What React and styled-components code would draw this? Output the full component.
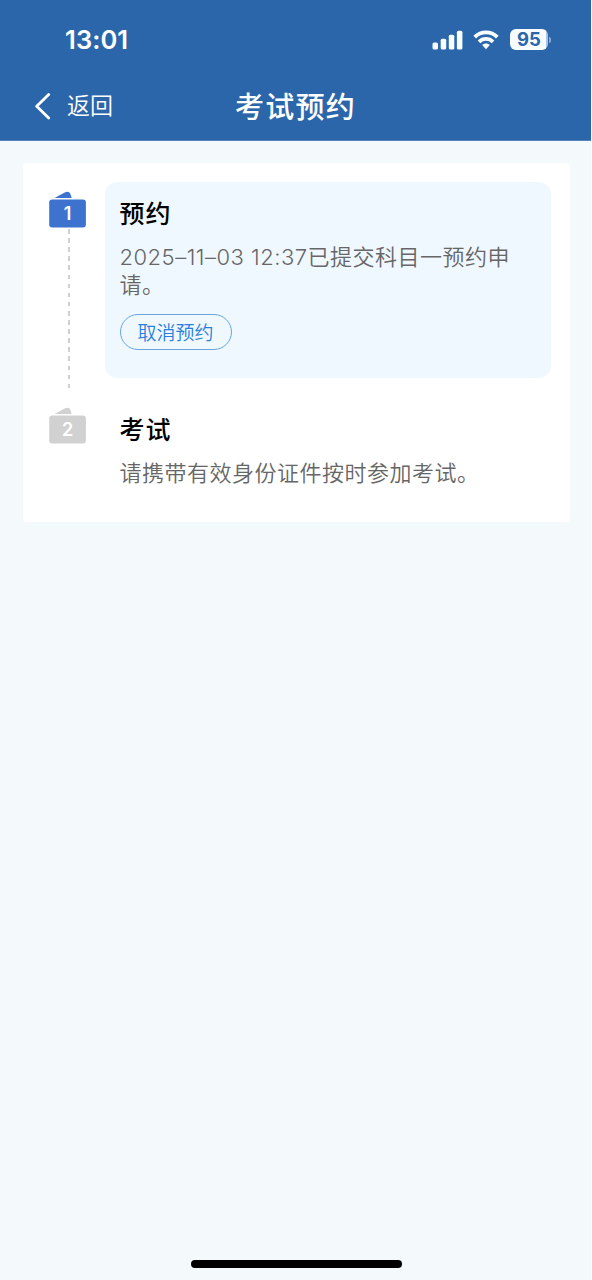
import React from "react";
import styled, { createGlobalStyle } from "styled-components";

const GlobalStyle = createGlobalStyle`
  * { box-sizing: border-box; }
  body {
    margin: 0;
    background: #f4f9fb;
    font-family: Inter, "Noto Sans CJK SC", sans-serif;
  }
`;

const Screen = styled.div`
  width: 592px;
  height: 1280px;
  display: flex;
  flex-direction: column;
  background: #f4f9fb;
  border-right: 1px solid #fbfdfe;
  overflow: hidden;
`;

const Header = styled.header`
  height: 141px;
  flex: none;
  background: #2c66aa;
  border-bottom: 1px solid #5583b6;
  color: #fff;
`;

const StatusBar = styled.div`
  height: 72px;
  display: flex;
  align-items: center;
  justify-content: space-between;
  padding: 7px 40px 0 65px;
`;

const Clock = styled.div`
  font-size: 25.5px;
  font-weight: 600;
  line-height: 30px;
  letter-spacing: 0.1px;
`;

const StatusIcons = styled.div`
  display: flex;
  align-items: center;
`;

const Battery = styled.div`
  width: 38px;
  height: 21px;
  margin-left: 11px;
  border-radius: 6px;
  background: linear-gradient(90deg, #f7fcff 95%, #a9c3df 95%);
  color: #2c66aa;
  font-size: 18.5px;
  font-weight: 700;
  line-height: 21px;
  text-align: center;
`;

const BatteryTip = styled.div`
  width: 2px;
  height: 6px;
  margin-left: 1px;
  border-radius: 0 2px 2px 0;
  background: #8aabd0;
`;

const NavBar = styled.div`
  height: 68px;
  display: grid;
  grid-template-columns: 1fr auto 1fr;
  align-items: center;
  padding: 0 34px;
`;

const Back = styled.div`
  display: flex;
  align-items: center;
  gap: 16px;
  font-size: 23px;
  font-weight: 350;
  line-height: 34px;
`;

const Title = styled.h1`
  margin: 0;
  padding-top: 4px;
  font-size: 29px;
  font-weight: 500;
  line-height: 38px;
  letter-spacing: 1.2px;
`;

const Card = styled.main`
  flex: none;
  height: 359px;
  margin: 22px 21.5px 0 22.5px;
  padding: 19px;
  border-radius: 4px;
  background: #fff;
`;

const Step = styled.section`
  display: flex;
  height: ${(p) => p.$height}px;
`;

const Rail = styled.div`
  width: 63px;
  flex: none;
  display: flex;
  flex-direction: column;
  padding: 9px 0 0 7.5px;
`;

const Marker = styled.div`
  width: 37px;
  height: 37px;
  flex: none;
  display: grid;
  color: ${(p) => (p.$active ? "#3d73cf" : "#d1d1d1")};
  > * { grid-area: 1 / 1; }
`;

const MarkerNumber = styled.span`
  padding-top: 9px;
  color: #fff;
  font-size: 18px;
  font-weight: 600;
  line-height: 28px;
  text-align: center;
`;

const Connector = styled.div`
  width: 1.5px;
  height: 160px;
  margin: 1px 0 0 19px;
  background: repeating-linear-gradient(#d0d0d0 0 4.6px, transparent 4.6px 9.1px);
`;

const Panel = styled.div`
  width: 446px;
  height: ${(p) => p.$height}px;
  padding: 12.5px 15px 0 15px;
  border-radius: 12px;
  background: ${(p) => (p.$active ? "#f0f8ff" : "transparent")};
`;

const StepTitle = styled.h2`
  margin: 0;
  color: #000;
  font-size: 25px;
  font-weight: 500;
  line-height: 39px;
  letter-spacing: 1px;
`;

const Message = styled.p`
  width: 410px;
  margin: 9.5px 0 0;
  color: #666;
  font-size: 22px;
  font-weight: 350;
  line-height: 28px;
  letter-spacing: 0.5px;
`;

const ButtonLabel = styled.span`
  font-size: 19px;
  font-weight: 350;
  line-height: 28px;
`;

const CancelButton = styled.button`
  display: flex;
  align-items: center;
  justify-content: center;
  width: 112px;
  height: 36px;
  margin-top: 14.5px;
  padding: 0;
  border: 1.5px solid #69a5dc;
  border-radius: 18px;
  background: transparent;
  color: #2a7fdc;
  font-family: "Noto Sans CJK SC", sans-serif;
`;

const HomeIndicator = styled.div`
  width: 211px;
  height: 8px;
  margin: auto auto 12px 191px;
  border-radius: 4px;
  background: #000;
`;

function Signal() {
  return (
    <svg width="31" height="20" viewBox="0 0 31 20" fill="#f7fcff">
      <rect x="0.5" y="12.5" width="5.5" height="7" rx="1.6" />
      <rect x="8.7" y="8.7" width="5.5" height="10.8" rx="1.6" />
      <rect x="16.8" y="4.7" width="5.5" height="14.8" rx="1.6" />
      <rect x="24.9" y="0.7" width="5.5" height="18.8" rx="1.6" />
    </svg>
  );
}

const WifiSvg = styled.svg`
  margin-left: 10px;
`;

function Wifi() {
  return (
    <WifiSvg width="26" height="20" viewBox="0 0 26 20" fill="none" stroke="#f7fcff" strokeWidth="3.8">
      <path d="M1.7 7.1C8 .9 18 .9 24.3 7.1" />
      <path d="M6 11.8c4-3.8 10-3.8 14 0" />
      <path d="M13 13.5c-1.5 0-2.8.5-3.8 1.5L13 19.2l3.8-4.2c-1-1-2.3-1.5-3.8-1.5Z" fill="#f7fcff" stroke="none" />
    </WifiSvg>
  );
}

function StepMarker({ number, active }) {
  return (
    <Marker $active={active}>
      <svg width="37" height="37" viewBox="0 0 37 37" fill="currentColor">
        <path d="M5.5 7 15.7 1.5c3-1.5 5-.8 6 2.2l1 3.3Z" />
        <rect x="0.2" y="8.6" width="36.7" height="28" rx="3" />
      </svg>
      <MarkerNumber>{number}</MarkerNumber>
    </Marker>
  );
}

export default function App() {
  return (
    <>
      <GlobalStyle />
      <Screen>
        <Header>
          <StatusBar>
            <Clock>13:01</Clock>
            <StatusIcons>
              <Signal />
              <Wifi />
              <Battery>95</Battery>
              <BatteryTip />
            </StatusIcons>
          </StatusBar>
          <NavBar>
            <Back>
              <svg width="17" height="28" viewBox="0 0 17 28" fill="none" stroke="#fff" strokeWidth="2.8" strokeLinecap="round" strokeLinejoin="round">
                <path d="M14.7 2.5 2.7 14.3l12 11.8" />
              </svg>
              返回
            </Back>
            <Title>考试预约</Title>
          </NavBar>
        </Header>
        <Card>
          <Step $height={216}>
            <Rail>
              <StepMarker number={1} active />
              <Connector />
            </Rail>
            <Panel $active $height={196}>
              <StepTitle>预约</StepTitle>
              <Message>2025–11–03 12:37已提交科目一预约申请。</Message>
              <CancelButton>
                <ButtonLabel>取消预约</ButtonLabel>
              </CancelButton>
            </Panel>
          </Step>
          <Step $height={105}>
            <Rail>
              <StepMarker number={2} />
            </Rail>
            <Panel $height={105}>
              <StepTitle>考试</StepTitle>
              <Message>请携带有效身份证件按时参加考试。</Message>
            </Panel>
          </Step>
        </Card>
        <HomeIndicator />
      </Screen>
    </>
  );
}
